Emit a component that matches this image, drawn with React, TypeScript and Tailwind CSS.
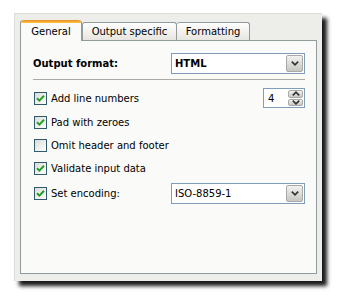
import React from 'react';

const font = { fontFamily: '"DejaVu Sans", Verdana, sans-serif' };

function Chevron({ up = false }: { up?: boolean }) {
  return (
    <svg width="8" height="5" viewBox="0 0 8 5" className={up ? 'rotate-180' : ''}>
      <path d="M0.8 0.6 L4 3.8 L7.2 0.6" fill="none" stroke="#333" strokeWidth="1.7" />
    </svg>
  );
}

function Select({ value, bold = false }: { value: string; bold?: boolean }) {
  return (
    <div className="flex h-[21px] w-[134px] items-stretch border border-[#7f9db9] bg-white p-px">
      <div className={`flex flex-1 items-center pl-[2px] text-[10px] text-black ${bold ? 'font-bold' : ''}`}>
        {value}
      </div>
      <div className="flex w-[17px] items-center justify-center rounded-[2px] border border-[#a9aaa8] bg-gradient-to-b from-[#f2f2f0] to-[#c6c6c2]">
        <Chevron />
      </div>
    </div>
  );
}

function Checkbox({ checked, label }: { checked: boolean; label: string }) {
  return (
    <div className="flex items-center gap-[4px]">
      <div className="ml-px flex h-[13px] w-[13px] items-center justify-center border border-[#2e5a6c] bg-gradient-to-br from-[#dcdcd6] to-white">
        {checked && (
          <svg width="9" height="9" viewBox="0 0 9 9">
            <path d="M1 4.2 L3.4 6.6 L8 1.8" fill="none" stroke="#21a121" strokeWidth="2" />
          </svg>
        )}
      </div>
      <span className="text-[10px] text-black">{label}</span>
    </div>
  );
}

function SpinBox({ value }: { value: string }) {
  return (
    <div className="flex h-[20px] w-[42px] items-stretch border border-[#7f9db9] bg-white p-px">
      <div className="flex flex-1 items-center pl-[3px] text-[10px] text-black">{value}</div>
      <div className="flex w-[15px] flex-col gap-px">
        <div className="flex flex-1 items-center justify-center rounded-[2px] border border-[#a9aaa8] bg-gradient-to-b from-[#f2f2f0] to-[#c6c6c2]">
          <Chevron up />
        </div>
        <div className="flex flex-1 items-center justify-center rounded-[2px] border border-[#a9aaa8] bg-gradient-to-b from-[#f2f2f0] to-[#c6c6c2]">
          <Chevron />
        </div>
      </div>
    </div>
  );
}

export default function App() {
  return (
    <div className="h-[296px] w-[338px] overflow-hidden bg-white pl-[14px] pt-[13px]" style={font}>
      <div className="flex h-[268px] w-[308px] flex-col border-l border-t border-[#dcdcd8] bg-[#ededea] pb-[7px] pl-[5px] pr-[5px] pt-[6px] shadow-[5px_5px_4px_rgba(0,0,0,0.9)]">
        {/* tabs */}
        <div className="flex h-[20px] items-end">
          <div className="relative z-10 -mb-px flex h-[21px] w-[62px] flex-col rounded-t-[3px] border-x border-[#919b9c] bg-[#fafaf8]">
            <div className="h-[3px] rounded-t-[3px] bg-gradient-to-b from-[#e68b2c] to-[#ffc73c]" />
            <div className="flex flex-1 items-center justify-center pb-[2px] text-[10px] text-black">General</div>
          </div>
          <div className="flex h-[18px] w-[95px] items-center justify-center rounded-t-[3px] border-x border-t border-[#919b9c] bg-gradient-to-b from-white to-[#e6e5df] text-[10px] text-black">
            Output specific
          </div>
          <div className="flex h-[18px] w-[73px] items-center justify-center rounded-t-[3px] border-r border-t border-[#919b9c] bg-gradient-to-b from-white to-[#e6e5df] text-[10px] text-black">
            Formatting
          </div>
        </div>
        {/* panel */}
        <div className="flex flex-1 flex-col border border-[#919b9c] bg-[#fafaf8] pl-[12px] pr-[11px] pt-[12px]">
          <div className="flex h-[21px] items-center justify-between">
            <span className="text-[10px] font-bold text-black">Output format:</span>
            <Select value="HTML" bold />
          </div>
          <div className="mt-[5px] h-px bg-[#aaa9a2]" />
          <div className="mt-[8px] flex h-[20px] items-center justify-between">
            <Checkbox checked label="Add line numbers" />
            <SpinBox value="4" />
          </div>
          <div className="mt-[3px] flex h-[23px] items-center">
            <Checkbox checked label="Pad with zeroes" />
          </div>
          <div className="flex h-[23px] items-center">
            <Checkbox checked={false} label="Omit header and footer" />
          </div>
          <div className="flex h-[23px] items-center">
            <Checkbox checked label="Validate input data" />
          </div>
          <div className="mt-[3px] flex h-[21px] items-center justify-between">
            <Checkbox checked label="Set encoding:" />
            <Select value="ISO-8859-1" />
          </div>
        </div>
      </div>
    </div>
  );
}
